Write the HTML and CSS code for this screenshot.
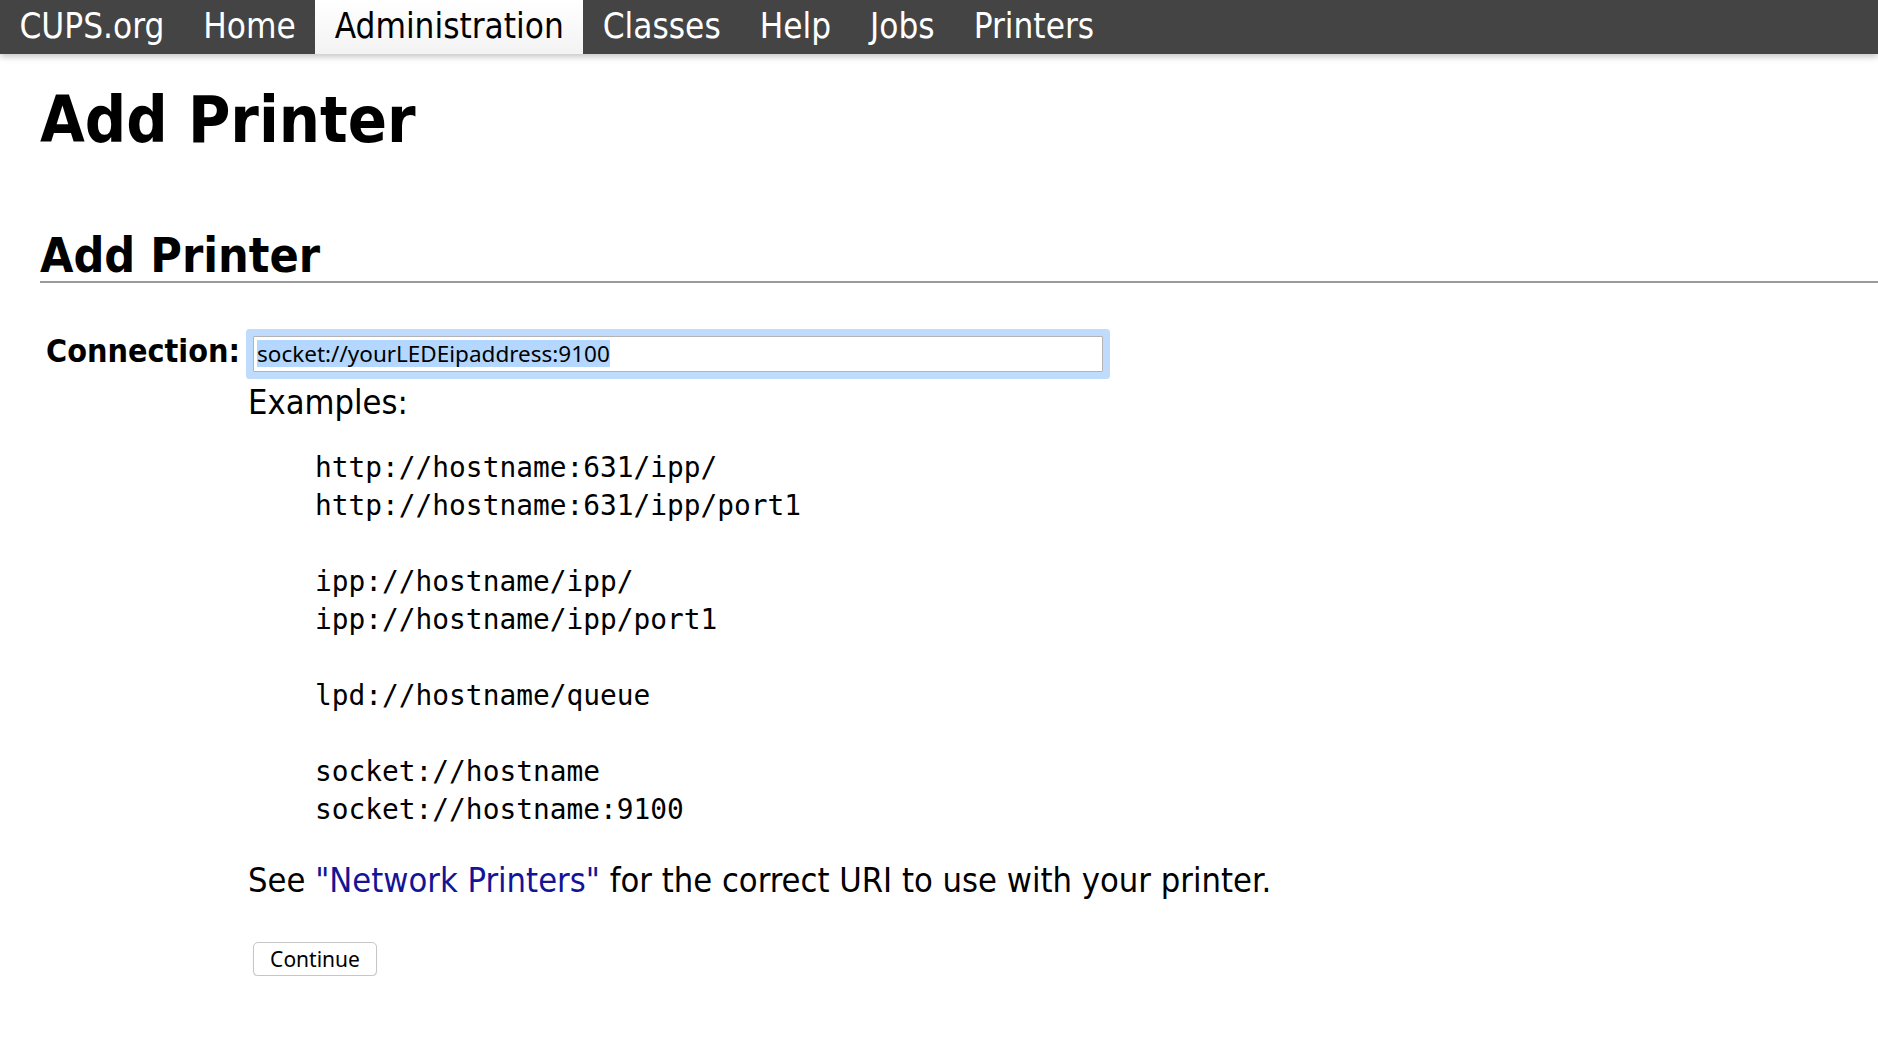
FILE: index.html
```html
<!DOCTYPE html>
<html lang="en">
<head>
<meta charset="utf-8">
<title>Add Printer - CUPS</title>
<link rel="stylesheet" href="styles.css">
</head>
<body>
<nav class="header">
  <a class="tab" href="#">CUPS.org</a>
  <a class="tab" href="#">Home</a>
  <a class="tab active" href="#">Administration</a>
  <a class="tab" href="#">Classes</a>
  <a class="tab" href="#">Help</a>
  <a class="tab" href="#">Jobs</a>
  <a class="tab" href="#">Printers</a>
</nav>
<main class="body">
  <h1 class="title">Add Printer</h1>
  <h2 class="title2">Add Printer</h2>
  <form class="form">
    <label class="label">Connection:</label>
    <div class="field">
      <div class="input"><span class="sel">socket://yourLEDEipaddress:9100</span></div>
      <p class="examples">Examples:</p>
<pre class="uris">http://hostname:631/ipp/
http://hostname:631/ipp/port1

ipp://hostname/ipp/
ipp://hostname/ipp/port1

lpd://hostname/queue

socket://hostname
socket://hostname:9100</pre>
      <p class="see">See <a class="link" href="#">"Network Printers"</a> for the correct URI to use with your printer.</p>
      <button class="btn" type="button">Continue</button>
    </div>
  </form>
</main>
</body>
</html>
```
FILE: styles.css
```css
html, body {
  margin: 0;
  padding: 0;
  background: #fff;
  color: #000;
}
body {
  font-family: "DejaVu Sans Condensed", "DejaVu Sans", sans-serif;
  font-stretch: condensed;
  font-size: 34.2px;
}
.header {
  display: flex;
  height: 54px;
  background: #444;
  box-shadow: 0 3px 6px rgba(0, 0, 0, 0.22);
}
.tab {
  display: block;
  padding: 0 19.5px 1px;
  line-height: 53px;
  color: #fff;
  text-decoration: none;
  font-size: 34.8px;
}
.tab.active {
  color: #000;
  background: linear-gradient(#ffffff, #f3f3f3);
}
.body {
  padding: 0 0 0 40px;
}
.title {
  margin: 28px 0 0;
  font-size: 64.4px;
  font-weight: bold;
  line-height: normal;
}
.title2 {
  margin: 72px 0 0;
  font-size: 48px;
  font-weight: bold;
  line-height: 52px;
  border-bottom: 2px solid #9a9a9a;
}
.form {
  display: grid;
  grid-template-columns: 208px 1fr;
  align-items: baseline;
  margin: 52.5px 0 0;
}
.label {
  font-weight: bold;
  font-size: 32px;
  line-height: 30px;
  text-align: right;
  padding-right: 8px;
}
.field {
  display: flex;
  flex-direction: column;
  align-items: flex-start;
}
.input {
  display: flex;
  align-items: center;
  box-sizing: border-box;
  width: 850px;
  height: 36px;
  margin-left: 5px;
  padding: 0 3px;
  border: 1px solid #b4b4b4;
  border-radius: 1px;
  box-shadow: 0 0 0 7px #c0dcfc;
  background: #fff;
}
.sel {
  display: inline-block;
  height: 27px;
  line-height: 27px;
  font-family: "Noto Sans", "Liberation Sans", sans-serif;
  font-stretch: normal;
  font-size: 22.5px;
  background: #b3d7ff;
  color: #000;
}
.examples {
  margin: 10.4px 0 0;
  line-height: normal;
}
.uris {
  margin: 27.3px 0 0 67px;
  font-family: "DejaVu Sans Mono", monospace;
  font-stretch: normal;
  font-size: 27.85px;
  line-height: 38px;
}
.see {
  margin: 31px 0 0;
  line-height: normal;
}
.link {
  color: #141496;
  text-decoration: none;
}
.btn {
  margin: 42px 0 0 5px;
  box-sizing: border-box;
  width: 124px;
  height: 34px;
  padding: 0;
  font-family: "Noto Sans", "Liberation Sans", sans-serif;
  font-stretch: normal;
  font-size: 21px;
  color: #000;
  background: #fff;
  border: 1px solid #c6c6c6;
  border-radius: 5px;
  box-shadow: 0 1px 1px rgba(0, 0, 0, 0.12);
}
```
